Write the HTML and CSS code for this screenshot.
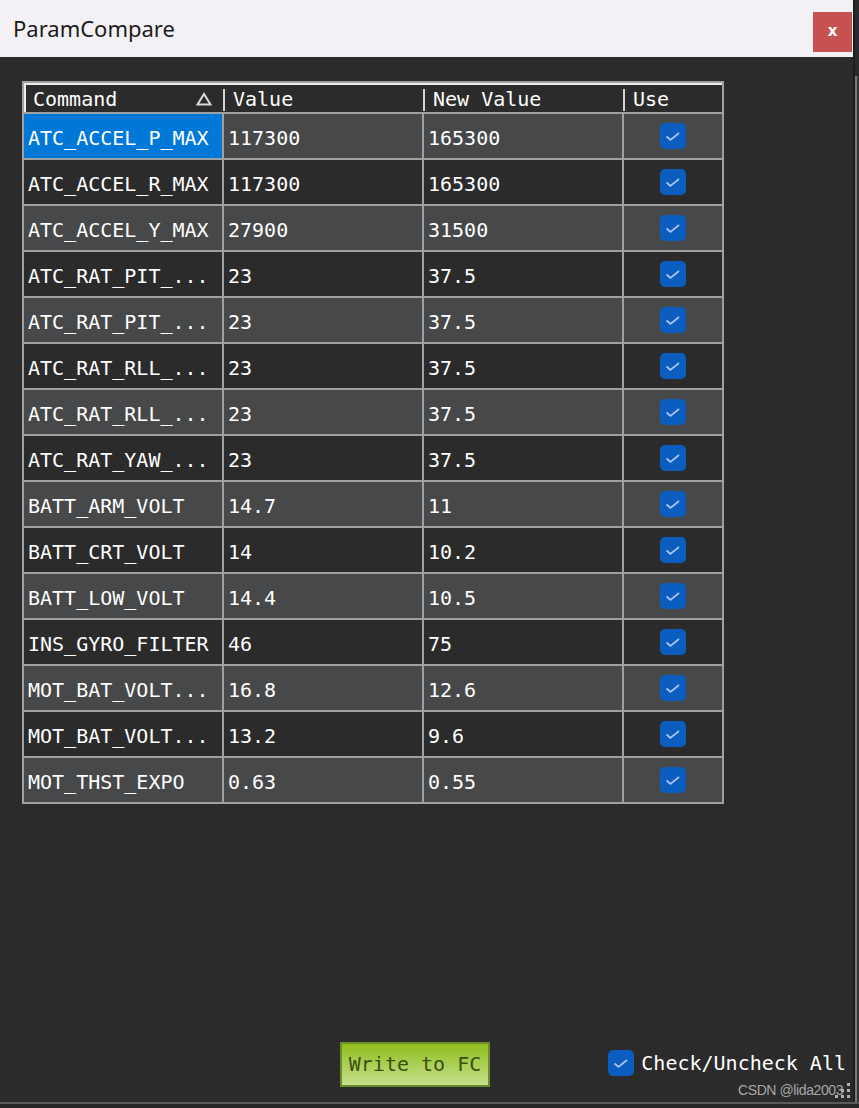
FILE: index.html
```html
<!DOCTYPE html>
<html>
<head>
<meta charset="utf-8">
<title>ParamCompare</title>
<link rel="stylesheet" href="styles.css">
</head>
<body>
<div class="screen">
  <div class="main">
    <div class="window">
      <div class="titlebar">
        <span class="title">ParamCompare</span>
        <div class="close">x</div>
      </div>
      <div class="content">
        <div class="table">
          <div class="thead">
            <div class="th th-cmd"><span>Command</span><svg class="sort" width="16" height="14" viewBox="0 0 16 14"><path d="M8 2 L14.5 12.5 H1.5 Z" fill="none" stroke="#d8d8d8" stroke-width="2"/></svg></div>
            <div class="th th-sep">Value</div>
            <div class="th th-sep">New Value</div>
            <div class="th th-sep th-use">Use</div>
          </div>

          <div class="td odd sel">ATC_ACCEL_P_MAX</div><div class="td odd">117300</div><div class="td odd">165300</div><div class="td odd chk"><span class="cb"><svg width="26" height="26" viewBox="0 0 26 26"><path d="M6.5 13.5 L10.5 17 L19 10" fill="none" stroke="#a9c8f2" stroke-width="1.7"/></svg></span></div>

          <div class="td even">ATC_ACCEL_R_MAX</div><div class="td even">117300</div><div class="td even">165300</div><div class="td even chk"><span class="cb"><svg width="26" height="26" viewBox="0 0 26 26"><path d="M6.5 13.5 L10.5 17 L19 10" fill="none" stroke="#a9c8f2" stroke-width="1.7"/></svg></span></div>

          <div class="td odd">ATC_ACCEL_Y_MAX</div><div class="td odd">27900</div><div class="td odd">31500</div><div class="td odd chk"><span class="cb"><svg width="26" height="26" viewBox="0 0 26 26"><path d="M6.5 13.5 L10.5 17 L19 10" fill="none" stroke="#a9c8f2" stroke-width="1.7"/></svg></span></div>

          <div class="td even">ATC_RAT_PIT_...</div><div class="td even">23</div><div class="td even">37.5</div><div class="td even chk"><span class="cb"><svg width="26" height="26" viewBox="0 0 26 26"><path d="M6.5 13.5 L10.5 17 L19 10" fill="none" stroke="#a9c8f2" stroke-width="1.7"/></svg></span></div>

          <div class="td odd">ATC_RAT_PIT_...</div><div class="td odd">23</div><div class="td odd">37.5</div><div class="td odd chk"><span class="cb"><svg width="26" height="26" viewBox="0 0 26 26"><path d="M6.5 13.5 L10.5 17 L19 10" fill="none" stroke="#a9c8f2" stroke-width="1.7"/></svg></span></div>

          <div class="td even">ATC_RAT_RLL_...</div><div class="td even">23</div><div class="td even">37.5</div><div class="td even chk"><span class="cb"><svg width="26" height="26" viewBox="0 0 26 26"><path d="M6.5 13.5 L10.5 17 L19 10" fill="none" stroke="#a9c8f2" stroke-width="1.7"/></svg></span></div>

          <div class="td odd">ATC_RAT_RLL_...</div><div class="td odd">23</div><div class="td odd">37.5</div><div class="td odd chk"><span class="cb"><svg width="26" height="26" viewBox="0 0 26 26"><path d="M6.5 13.5 L10.5 17 L19 10" fill="none" stroke="#a9c8f2" stroke-width="1.7"/></svg></span></div>

          <div class="td even">ATC_RAT_YAW_...</div><div class="td even">23</div><div class="td even">37.5</div><div class="td even chk"><span class="cb"><svg width="26" height="26" viewBox="0 0 26 26"><path d="M6.5 13.5 L10.5 17 L19 10" fill="none" stroke="#a9c8f2" stroke-width="1.7"/></svg></span></div>

          <div class="td odd">BATT_ARM_VOLT</div><div class="td odd">14.7</div><div class="td odd">11</div><div class="td odd chk"><span class="cb"><svg width="26" height="26" viewBox="0 0 26 26"><path d="M6.5 13.5 L10.5 17 L19 10" fill="none" stroke="#a9c8f2" stroke-width="1.7"/></svg></span></div>

          <div class="td even">BATT_CRT_VOLT</div><div class="td even">14</div><div class="td even">10.2</div><div class="td even chk"><span class="cb"><svg width="26" height="26" viewBox="0 0 26 26"><path d="M6.5 13.5 L10.5 17 L19 10" fill="none" stroke="#a9c8f2" stroke-width="1.7"/></svg></span></div>

          <div class="td odd">BATT_LOW_VOLT</div><div class="td odd">14.4</div><div class="td odd">10.5</div><div class="td odd chk"><span class="cb"><svg width="26" height="26" viewBox="0 0 26 26"><path d="M6.5 13.5 L10.5 17 L19 10" fill="none" stroke="#a9c8f2" stroke-width="1.7"/></svg></span></div>

          <div class="td even">INS_GYRO_FILTER</div><div class="td even">46</div><div class="td even">75</div><div class="td even chk"><span class="cb"><svg width="26" height="26" viewBox="0 0 26 26"><path d="M6.5 13.5 L10.5 17 L19 10" fill="none" stroke="#a9c8f2" stroke-width="1.7"/></svg></span></div>

          <div class="td odd">MOT_BAT_VOLT...</div><div class="td odd">16.8</div><div class="td odd">12.6</div><div class="td odd chk"><span class="cb"><svg width="26" height="26" viewBox="0 0 26 26"><path d="M6.5 13.5 L10.5 17 L19 10" fill="none" stroke="#a9c8f2" stroke-width="1.7"/></svg></span></div>

          <div class="td even">MOT_BAT_VOLT...</div><div class="td even">13.2</div><div class="td even">9.6</div><div class="td even chk"><span class="cb"><svg width="26" height="26" viewBox="0 0 26 26"><path d="M6.5 13.5 L10.5 17 L19 10" fill="none" stroke="#a9c8f2" stroke-width="1.7"/></svg></span></div>

          <div class="td odd">MOT_THST_EXPO</div><div class="td odd">0.63</div><div class="td odd">0.55</div><div class="td odd chk"><span class="cb"><svg width="26" height="26" viewBox="0 0 26 26"><path d="M6.5 13.5 L10.5 17 L19 10" fill="none" stroke="#a9c8f2" stroke-width="1.7"/></svg></span></div>
        </div>

        <div class="footer">
          <button class="write">Write to FC</button>
          <div class="checkall">
            <span class="cb"><svg width="26" height="26" viewBox="0 0 26 26"><path d="M6.5 13.5 L10.5 17 L19 10" fill="none" stroke="#a9c8f2" stroke-width="1.7"/></svg></span>
            <span class="checkall-label">Check/Uncheck All</span>
          </div>
        </div>
      </div>
    </div>
    <div class="edge"></div>
  </div>
  <div class="bottom"></div>
  <div class="watermark">CSDN @lida2003</div>
  <svg class="grip" width="20" height="20" viewBox="0 0 20 20">
    <rect x="15" y="3" width="3" height="3" fill="#b0b0b0"/>
    <rect x="15" y="9" width="3" height="3" fill="#b0b0b0"/>
    <rect x="15" y="15" width="3" height="3" fill="#b0b0b0"/>
    <rect x="9" y="9" width="3" height="3" fill="#b0b0b0"/>
    <rect x="9" y="15" width="3" height="3" fill="#b0b0b0"/>
    <rect x="3" y="15" width="3" height="3" fill="#b0b0b0"/>
  </svg>
</div>
</body>
</html>
```

FILE: styles.css
```css
* { box-sizing: border-box; }

html, body {
  margin: 0;
  padding: 0;
  background: #2b2b2b;
}

.screen {
  position: relative;
  width: 859px;
  height: 1108px;
  overflow: hidden;
  display: flex;
  flex-direction: column;
}

.main {
  display: flex;
  height: 1102px;
}

.window {
  width: 853px;
  display: flex;
  flex-direction: column;
  background: #2b2b2b;
}

.titlebar {
  height: 57px;
  background: #f3f1f5;
  display: flex;
  align-items: center;
  justify-content: space-between;
  padding-left: 13px;
  padding-right: 1px;
}

.title {
  font-family: "Noto Sans", "Open Sans", sans-serif;
  font-size: 22px;
  color: #1b1b1b;
  margin-top: -2px;
}

.close {
  align-self: flex-start;
  margin-top: 12px;
  width: 39px;
  height: 40px;
  background: #c75050;
  color: #ffffff;
  font-family: "DejaVu Sans", sans-serif;
  font-weight: bold;
  font-size: 15px;
  display: flex;
  align-items: center;
  justify-content: center;
  padding-bottom: 2px;
}

.content {
  flex: 1;
  display: flex;
  flex-direction: column;
  padding: 24px 0 0 22px;
}

.table {
  width: 702px;
  display: grid;
  grid-template-columns: 198px 198px 198px 98px;
  grid-template-rows: 29px;
  grid-auto-rows: 44px;
  gap: 2px;
  padding: 2px;
  background: #a0a0a0;
  font-family: "DejaVu Sans Mono", monospace;
  font-size: 20px;
  color: #ffffff;
}

.thead {
  grid-column: 1 / -1;
  height: 29px;
  display: flex;
  background: #2b2b2b;
  border-top: 2px solid #ececec;
  border-left: 2px solid #ececec;
}

.th {
  position: relative;
  display: flex;
  align-items: center;
  height: 100%;
  white-space: nowrap;
}

.th-cmd {
  width: 196px;
  padding-left: 7px;
  padding-right: 10px;
  justify-content: space-between;
}

.th-sep {
  width: 200px;
  padding-left: 11px;
}

.th-use {
  width: 100px;
}

.th-sep::before {
  content: "";
  position: absolute;
  left: 1px;
  top: 4px;
  bottom: 1px;
  width: 2px;
  background: #d4d4d4;
}

.sort {
  display: block;
}

.td {
  display: flex;
  align-items: center;
  padding-left: 4px;
  padding-top: 3px;
  white-space: nowrap;
  overflow: hidden;
}

.odd { background: #474849; }
.even { background: #2b2b2b; }
.sel { background: #0078d7; }

.chk {
  justify-content: center;
  padding-left: 0;
  padding-top: 0;
}

.cb {
  display: inline-flex;
  width: 26px;
  height: 26px;
  border-radius: 5px;
  background: #0b5dbf;
}

.cb svg { display: block; }

.footer {
  margin-top: auto;
  margin-bottom: 16px;
  height: 44px;
  display: flex;
  align-items: center;
  padding-left: 318px;
  padding-right: 7px;
}

.write {
  width: 150px;
  height: 45px;
  border: 2px solid #6b8d2a;
  background: linear-gradient(#8fbe1d, #c6e08e);
  color: #3a5010;
  font-family: "DejaVu Sans Mono", monospace;
  font-size: 20px;
  padding: 0;
  margin: 0;
}

.checkall {
  margin-left: auto;
  display: flex;
  align-items: center;
  gap: 7px;
  font-family: "DejaVu Sans Mono", monospace;
  font-size: 20px;
  color: #ffffff;
  margin-top: -2px;
}

.edge {
  width: 6px;
  border-left: 2px solid #1c1c1c;
  background:
    linear-gradient(#2b2b2b, #2b2b2b) top / 100% 76px no-repeat,
    linear-gradient(to right, #7a7a7a 0 2px, #363636 2px);
}

.bottom {
  height: 6px;
  border-top: 2px solid #5a5a5a;
  background: #262626;
}

.watermark {
  position: absolute;
  left: 738px;
  top: 1082px;
  font-family: "Liberation Sans", Arial, sans-serif;
  font-size: 14px;
  letter-spacing: -0.4px;
  color: #a8a8a8;
}

.grip {
  position: absolute;
  left: 832px;
  top: 1080px;
}
```
